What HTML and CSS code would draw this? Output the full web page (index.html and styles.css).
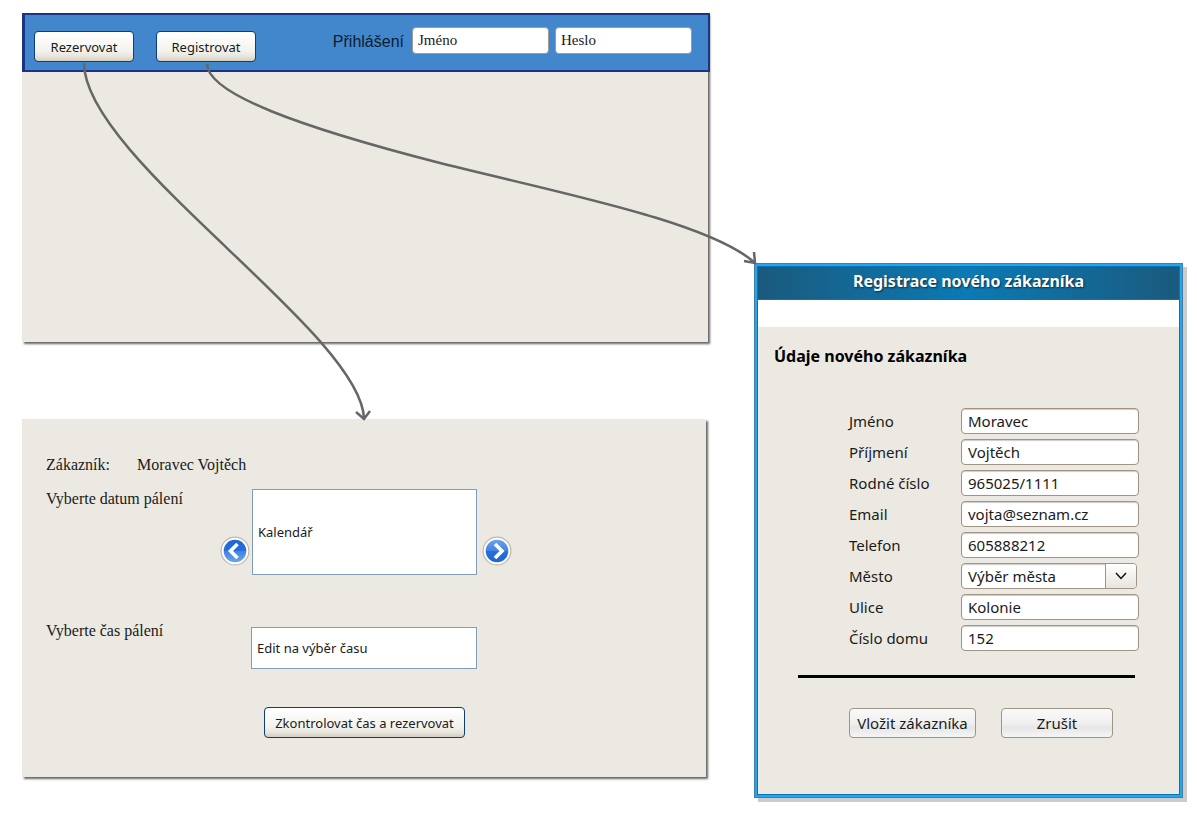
FILE: index.html
```html
<!DOCTYPE html>
<html lang="cs">
<head>
<meta charset="utf-8">
<title>Rezervace a registrace</title>
<link rel="stylesheet" href="styles.css">
</head>
<body>
<main class="board">
  <div class="screens">
    <section class="window home">
      <header class="topbar">
        <nav class="actions">
          <button class="btn" type="button">Rezervovat</button>
          <button class="btn" type="button">Registrovat</button>
        </nav>
        <form class="login">
          <label class="login-label" for="login-name">Přihlášení</label>
          <input class="login-input" id="login-name" type="text" value="Jméno">
          <input class="login-input" type="text" value="Heslo" aria-label="Heslo">
        </form>
      </header>
    </section>

    <section class="window booking">
      <p class="customer"><span class="customer-key">Zákazník:</span><span>Moravec Vojtěch</span></p>
      <div class="line date-line">
        <label class="line-label" for="date">Vyberte datum pálení</label>
        <button class="round" type="button" aria-label="Předchozí">
          <svg viewBox="0 0 30 30" width="30" height="30">
            <defs><linearGradient id="blue-prev" x2="0" y2="1"><stop offset="0" stop-color="#1f66d2"/><stop offset=".5" stop-color="#2570dc"/><stop offset=".52" stop-color="#4584de"/><stop offset="1" stop-color="#6ba3ec"/></linearGradient></defs>
            <circle cx="15" cy="15" r="14.5" fill="#bcb8b4"/><circle cx="15" cy="15" r="13.3" fill="#fff"/>
            <circle cx="15" cy="15" r="11.3" fill="url(#blue-prev)"/>
            <path d="M17.5 8 10.500 15l7 7" fill="none" stroke="#fff" stroke-width="3.6"/>
          </svg>
        </button>
        <input class="box calendar" id="date" type="text" value="Kalendář">
        <button class="round" type="button" aria-label="Další">
          <svg viewBox="0 0 30 30" width="30" height="30">
            <defs><linearGradient id="blue-next" x2="0" y2="1"><stop offset="0" stop-color="#6ba3ec"/><stop offset=".48" stop-color="#4584de"/><stop offset=".5" stop-color="#2570dc"/><stop offset="1" stop-color="#1f66d2"/></linearGradient></defs>
            <circle cx="15" cy="15" r="14.5" fill="#bcb8b4"/><circle cx="15" cy="15" r="13.3" fill="#fff"/>
            <circle cx="15" cy="15" r="11.3" fill="url(#blue-next)"/>
            <path d="M13 8 20 15l-7 7" fill="none" stroke="#fff" stroke-width="3.6"/>
          </svg>
        </button>
      </div>
      <div class="line time-line">
        <label class="line-label" for="time">Vyberte čas pálení</label>
        <input class="box time" id="time" type="text" value="Edit na výběr času">
      </div>
      <button class="btn submit" type="button">Zkontrolovat čas a rezervovat</button>
    </section>
  </div>

  <section class="dialog">
    <h1 class="dialog-title">Registrace nového zákazníka</h1>
    <form class="dialog-body">
      <h2 class="dialog-heading">Údaje nového zákazníka</h2>
      <div class="fields">
        <label for="f1">Jméno</label><input class="field" id="f1" type="text" value="Moravec">
        <label for="f2">Příjmení</label><input class="field" id="f2" type="text" value="Vojtěch">
        <label for="f3">Rodné číslo</label><input class="field" id="f3" type="text" value="965025/1111">
        <label for="f4">Email</label><input class="field" id="f4" type="text" value="vojta@seznam.cz">
        <label for="f5">Telefon</label><input class="field" id="f5" type="text" value="605888212">
        <label for="f6">Město</label>
        <div class="combo">
          <select class="field" id="f6"><option>Výběr města</option></select>
          <span class="combo-arrow"><svg viewBox="0 0 14 10" width="14" height="10"><path d="M2 2l5 5.500 5-5.500" fill="none" stroke="#111" stroke-width="1.500"/></svg></span>
        </div>
        <label for="f7">Ulice</label><input class="field" id="f7" type="text" value="Kolonie">
        <label for="f8">Číslo domu</label><input class="field" id="f8" type="text" value="152">
      </div>
      <hr class="rule">
      <div class="dialog-actions">
        <button class="plain save" type="button">Vložit zákazníka</button>
        <button class="plain cancel" type="button">Zrušit</button>
      </div>
    </form>
  </section>

  <svg class="links" viewBox="0 0 1197 824" preserveAspectRatio="none" aria-hidden="true">
    <path d="M84 63C84 158 360 332 364 418"/>
    <path d="M356 412l8 7 6-8"/>
    <path d="M207 64C208 94 300 127 440 163C560 193 710 222 755 263"/>
    <path d="M744 261l11 2-1-11"/>
  </svg>
</main>
</body>
</html>
```

FILE: styles.css
```css
* { box-sizing: border-box; }

body {
  margin: 0;
  background: #fff;
  color: #1a1a1a;
  font-family: "Noto Sans", "Open Sans", sans-serif;
}

button, input, select { font-family: inherit; color: inherit; }

.board {
  position: relative;
  display: grid;
  grid-template-columns: 688fr 429fr;
  column-gap: 44px;
  align-items: start;
  min-height: 824px;
  padding: 13px 14px 24px 22px;
}

.links {
  position: absolute;
  inset: 0;
  width: 100%;
  height: 824px;
  pointer-events: none;
  fill: none;
  stroke: #666;
  stroke-width: 2.5px;
}

.screens { display: flex; flex-direction: column; gap: 77px; }

.window {
  background: #ece9e2;
  box-shadow: 2px 2px 2px #666;
}

.home { min-height: 329px; margin-right: 2px; }

.topbar {
  display: flex;
  justify-content: space-between;
  align-items: flex-start;
  margin-right: -2px;
  padding: 12px 16px 8px 9px;
  border: 2px solid #1c3282;
  border-left-width: 3px;
  background: #4287cc;
}

.actions { display: flex; gap: 22px; padding-top: 4px; }

.btn {
  height: 31px;
  min-width: 100px;
  padding: 0 10px;
  border: 1px solid #0b3f75;
  border-radius: 4px;
  background: linear-gradient(#fff, #f3f3ee 65%, #e7e4da 85%, #d3cec0);
  font-size: 13px;
}

.login { display: flex; align-items: center; gap: 6px; }

.login-label {
  margin-right: 2px;
  padding-top: 2px;
  font-family: "Liberation Sans", Arial, sans-serif;
  font-size: 16px;
  color: #0c1c30;
}

.login-input {
  width: 137px;
  height: 27px;
  padding: 0 5px;
  border: 1px solid #a09a92;
  border-radius: 4px;
  background: #fff;
  font-family: "Liberation Serif", "Times New Roman", serif;
  font-size: 15px;
}

.booking {
  margin-right: 4px;
  padding: 36px 24px 39px;
  font-family: "Liberation Serif", "Times New Roman", serif;
  font-size: 16px;
  line-height: 19px;
}

.customer { display: flex; margin: 0 0 15px; }
.customer-key { width: 91px; }

.line { display: flex; align-items: flex-start; }
.line-label { width: 174px; }

.round {
  display: block;
  width: 30px;
  height: 30px;
  margin: 47px 2px 0 0;
  padding: 0;
  border: 0;
  background: none;
}

.box {
  width: 225px;
  padding: 0 5px;
  border: 1px solid #7f9db9;
  background: #fff;
  font-family: "Noto Sans", "Open Sans", sans-serif;
  font-size: 13px;
}

.calendar { height: 86px; margin-right: 5px; }
.time-line { margin-top: 46px; }
.time { width: 226px; height: 42px; margin: 6px 0 0 31px; }
.submit { display: block; width: 201px; margin: 38px 0 0 218px; font-family: "Noto Sans", "Open Sans", sans-serif; }

.dialog {
  margin-top: 250px;
  padding: 3px;
  border: 1px solid #3f7ea5;
  background: #0a73b5;
  box-shadow: inset 0 0 0 2px #24a5ee, 4px 4px 0 #ccc;
}

.dialog-title {
  margin: 0;
  padding: 3px 0 6px;
  border-bottom: 1px solid #0a73b5;
  background: linear-gradient(90deg, #1a5a7d, #0b7ab5 50%, #1a5a7d);
  color: #fff;
  font-size: 16px;
  line-height: 23px;
  text-align: center;
  text-shadow: 1px 1px 2px #0a2c44;
}

.dialog-body {
  padding: 17px 40px 56px;
  border-top: 27px solid #fff;
  background: #ece9e2;
  font-size: 15px;
}

.dialog-heading {
  margin: 0 0 40px -24px;
  color: #000;
  font-size: 16px;
  line-height: 24px;
}

.fields {
  display: grid;
  grid-template-columns: 112px 1fr;
  row-gap: 5px;
  align-items: center;
  padding-left: 51px;
  line-height: 26px;
}

.field {
  width: 100%;
  height: 26px;
  padding: 0 6px;
  border: 1px solid #a09484;
  border-radius: 4px;
  background: #fff;
  box-shadow: inset 0 1px 1px #ccc;
  font-size: 15px;
}

.combo { position: relative; height: 26px; margin-right: 2px; }
.combo .field { display: block; appearance: none; }

.combo-arrow {
  position: absolute;
  inset: 1px 1px 1px auto;
  display: flex;
  align-items: center;
  justify-content: center;
  width: 31px;
  border-left: 1px solid #a09484;
  border-radius: 0 3px 3px 0;
  background: linear-gradient(#fff, #e8e5dd);
  pointer-events: none;
}

.rule { height: 3px; margin: 24px 4px 30px 0; border: 0; background: #000; }

.dialog-actions { display: flex; gap: 25px; padding-left: 51px; }

.plain {
  height: 30px;
  padding: 0;
  border: 1px solid #a09484;
  border-radius: 4px;
  background: linear-gradient(#fafafa, #f0f0f0 50%, #e6e6e6 65%, #f5f5f5);
  font-size: 15px;
}

.save { width: 127px; }
.cancel { width: 112px; }
```
